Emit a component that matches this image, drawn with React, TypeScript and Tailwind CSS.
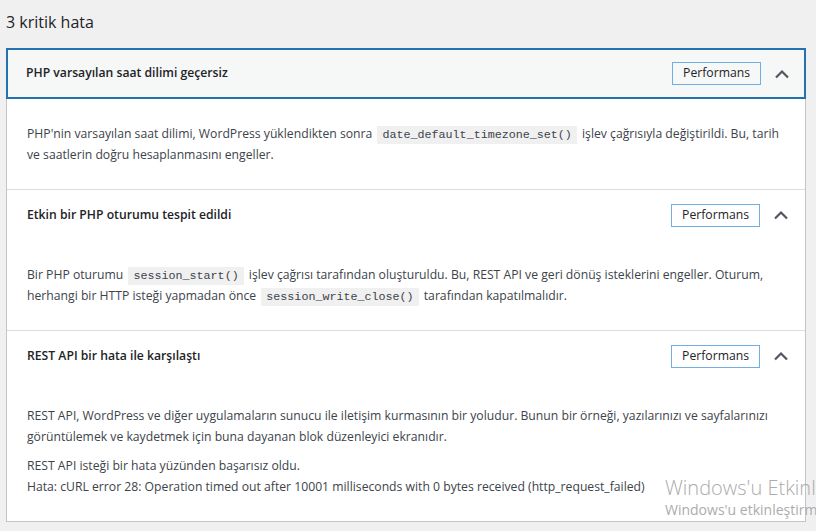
import React from 'react';

type Issue = {
  title: string;
  badge: string;
  focused?: boolean;
  body: React.ReactNode;
};

const Code: React.FC<{ children: React.ReactNode }> = ({ children }) => (
  <code className="bg-[#f0f0f1] px-[5px] pt-[2px] pb-[2px] mx-[2px] text-[11.7px] leading-none text-[#3c434a] font-['Liberation_Mono',monospace]">
    {children}
  </code>
);

const ChevronUp = () => (
  <svg width="16" height="10" viewBox="0 0 16 10" fill="none">
    <path d="M2 8.5 L8 2.5 L14 8.5" stroke="#50575e" strokeWidth="2.2" strokeLinecap="butt" strokeLinejoin="miter" />
  </svg>
);

const issues: Issue[] = [
  {
    title: 'PHP varsayılan saat dilimi geçersiz',
    badge: 'Performans',
    focused: true,
    body: (
      <p>
        PHP'nin varsayılan saat dilimi, WordPress yüklendikten sonra <Code>date_default_timezone_set()</Code> işlev çağrısıyla değiştirildi. Bu, tarih ve saatlerin doğru hesaplanmasını engeller.
      </p>
    ),
  },
  {
    title: 'Etkin bir PHP oturumu tespit edildi',
    badge: 'Performans',
    body: (
      <p>
        Bir PHP oturumu <Code>session_start()</Code> işlev çağrısı tarafından oluşturuldu. Bu, REST API ve geri dönüş isteklerini engeller. Oturum, herhangi bir HTTP isteği yapmadan önce <Code>session_write_close()</Code> tarafından kapatılmalıdır.
      </p>
    ),
  },
  {
    title: 'REST API bir hata ile karşılaştı',
    badge: 'Performans',
    body: (
      <>
        <p>
          REST API, WordPress ve diğer uygulamaların sunucu ile iletişim kurmasının bir yoludur. Bunun bir örneği, yazılarınızı ve sayfalarınızı görüntülemek ve kaydetmek için buna dayanan blok düzenleyici ekranıdır.
        </p>
        <p className="mt-[9px]">
          REST API isteği bir hata yüzünden başarısız oldu.
          <br />
          Hata: cURL error 28: Operation timed out after 10001 milliseconds with 0 bytes received (http_request_failed)
        </p>
      </>
    ),
  },
];

export default function App() {
  return (
    <div className="relative h-[531px] overflow-hidden bg-[#f0f0f1] font-['Open_Sans',sans-serif] text-[#1d2327]">
      <h2 className="pl-[6px] pt-[9px] h-[48px] text-[16px] font-normal leading-[26px]">3 kritik hata</h2>

      <div className="ml-[6px] w-[800px] border border-[#c3c4c7] bg-white">
        {issues.map((issue, i) => (
          <div key={issue.title} className={i > 0 ? 'border-t border-[#dcdcde]' : ''}>
            <div
              className={
                'flex items-center h-[50px] pl-[20px] pr-[16px] ' +
                (issue.focused ? 'bg-[#f6f7f7] ring-2 ring-inset ring-[#2271b1] -mx-px -mt-px h-[51px]' : 'bg-white')
              }
            >
              <span className="flex-1 text-[12.2px] font-semibold">{issue.title}</span>
              <span className="border border-[#72aee6] px-[10px] h-[23px] flex items-center text-[12.2px] text-[#1d2327]">
                {issue.badge}
              </span>
              <span className="ml-[13px] w-[16px] flex justify-center">
                <ChevronUp />
              </span>
            </div>
            <div className="px-[20px] pt-[25px] pb-[24px] text-[12.2px] leading-[20.5px] text-[#3c434a]">
              {issue.body}
            </div>
          </div>
        ))}
      </div>

      <div className="pointer-events-none absolute left-[665px] top-[475px] whitespace-nowrap text-[#acacac] font-['Open_Sans',sans-serif]">
        <div className="text-[20px] font-light leading-[26px]">Windows'u Etkinleştirin</div>
        <div className="text-[14px] leading-[18px]">Windows'u etkinleştirmek için Ayarlar'a gidin.</div>
      </div>
    </div>
  );
}
